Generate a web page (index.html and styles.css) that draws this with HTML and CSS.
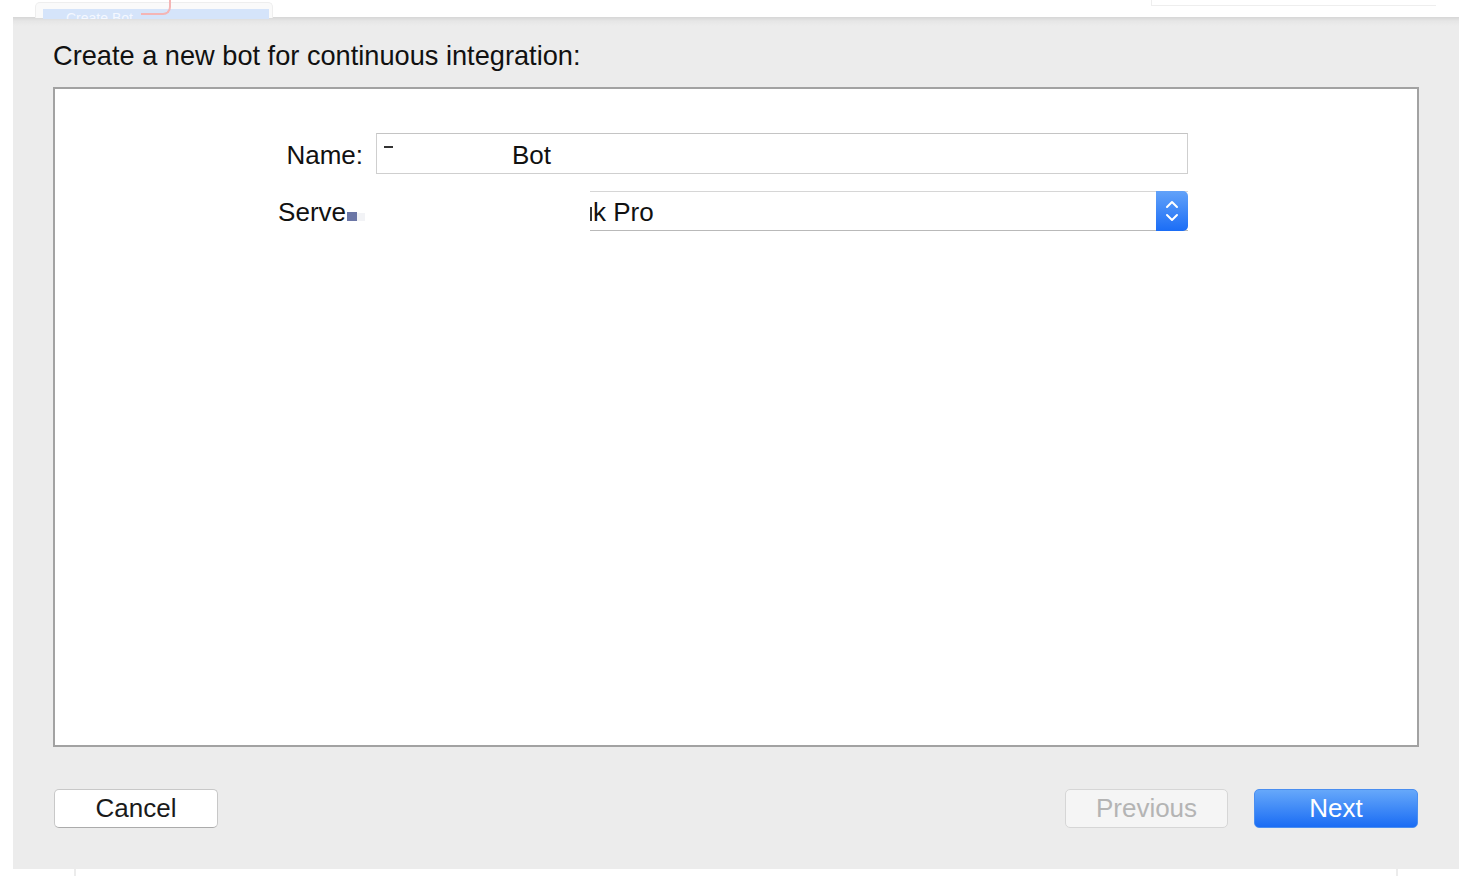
FILE: index.html
```html
<!DOCTYPE html>
<html>
<head>
<meta charset="utf-8">
<link rel="stylesheet" href="styles.css">
</head>
<body>
<div class="backdrop-top">
  <div class="menu-frag">
    <div class="menu-item">Create Bot</div>
    <div class="red-curve"></div>
  </div>
  <div class="right-frag"></div>
</div>
<div class="sheet">
  <div class="title">Create a new bot for continuous integration:</div>
  <div class="box">
    <div class="form">
      <div class="label name-label">Name:</div>
      <div class="field name-field"><span class="mark"></span><span class="name-text">Bot</span></div>
      <div class="label server-label">Serve<span class="sq"></span><span class="sq2"></span></div>
      <div class="server-row">
        <div class="redact"></div>
        <div class="popup">
          <div class="popup-text"><span class="frag"></span>k Pro</div>
          <div class="stepper">
            <svg width="14" height="24" viewBox="0 0 14 24"><path d="M2 8 L7 3 L12 8" fill="none" stroke="#fff" stroke-width="2" stroke-linecap="round" stroke-linejoin="round"/><path d="M2 16 L7 21 L12 16" fill="none" stroke="#fff" stroke-width="2" stroke-linecap="round" stroke-linejoin="round"/></svg>
          </div>
        </div>
      </div>
    </div>
  </div>
  <div class="buttons">
    <div class="btn cancel">Cancel</div>
    <div class="spacer"></div>
    <div class="btn previous">Previous</div>
    <div class="btn next">Next</div>
  </div>
</div>
<div class="backdrop-bottom">
  <div class="vline vl1"></div>
  <div class="vline vl2"></div>
</div>
</body>
</html>
```
FILE: styles.css
```css
html, body {
  margin: 0;
  padding: 0;
  background: #ffffff;
  width: 1466px;
  height: 876px;
  overflow: hidden;
  font-family: "Liberation Sans", Arial, sans-serif;
}
.backdrop-top {
  height: 17px;
  position: relative;
}
.menu-frag {
  position: absolute;
  left: 35px;
  top: 2px;
  width: 236px;
  height: 15px;
  border: 1px solid #eeeeee;
  border-bottom: none;
  border-radius: 5px 5px 0 0;
  background: #fafafa;
}
.menu-item {
  position: absolute;
  left: 7px;
  top: 6px;
  width: 226px;
  height: 10px;
  background: #d5e4fa;
  color: #f4f8ff;
  font-size: 14px;
  line-height: 18px;
  padding-left: 23px;
  box-sizing: border-box;
  overflow: hidden;
}
.red-curve {
  position: absolute;
  left: 105px;
  top: -3px;
  width: 28px;
  height: 13px;
  border-right: 2px solid #f4b5b5;
  border-bottom: 2px solid #f4b5b5;
  border-radius: 0 0 8px 0;
}
.right-frag {
  position: absolute;
  left: 1151px;
  top: 0;
  width: 284px;
  height: 5px;
  border-left: 1px solid #eeeeee;
  border-bottom: 1px solid #eeeeee;
}
.sheet {
  margin-left: 13px;
  width: 1446px;
  height: 852px;
  background: linear-gradient(#d6d6d6 0px, #e6e6e6 4px, #ececec 9px, #ececec 100%);
  box-sizing: border-box;
  padding: 0 40px;
  display: flex;
  flex-direction: column;
}
.title {
  margin-top: 24px;
  height: 46px;
  font-size: 27.2px;
  line-height: 30px;
  color: #111;
}
.box {
  height: 660px;
  background: #fff;
  border: 2px solid #a2a2a2;
  box-sizing: border-box;
}
.form {
  display: grid;
  grid-template-columns: 308px 812px;
  column-gap: 13px;
  row-gap: 17px;
  padding-top: 44px;
}
.label {
  text-align: right;
  font-size: 26px;
  color: #111;
  line-height: 41px;
  height: 41px;
}
.name-label {
  padding-top: 2px;
  height: 39px;
}
.server-label {
  line-height: 40px;
  height: 40px;
  padding-top: 1px;
  text-align: right;
  margin-right: -2px;
}
.sq {
  display: inline-block;
  width: 10px;
  height: 9px;
  background: #6b76a6;
  vertical-align: baseline;
  margin-left: 1px;
}
.sq2 {
  display: inline-block;
  width: 8px;
  height: 8px;
  background: #f2f3f6;
  vertical-align: baseline;
}
.field {
  height: 41px;
  border: 1px solid #cfcfcf;
  border-top-color: #c4c4c4;
  box-sizing: border-box;
  display: flex;
  align-items: center;
  font-size: 26px;
  color: #111;
  padding-top: 4px;
}
.mark {
  display: inline-block;
  width: 9px;
  height: 2px;
  background: #333;
  margin-left: 7px;
  margin-bottom: 18px;
}
.name-text {
  margin-left: 119px;
}
.server-row {
  display: flex;
  height: 40px;
}
.redact {
  width: 214px;
  background: #fff;
}
.popup {
  flex: 1;
  display: flex;
  border-top: 1px solid #d6d6d6;
  border-bottom: 1px solid #b9b9b9;
  box-sizing: border-box;
  height: 40px;
}
.popup-text {
  flex: 1;
  font-size: 26px;
  line-height: 40px;
  color: #111;
  overflow: hidden;
  white-space: nowrap;
}
.frag {
  display: inline-block;
  width: 2px;
  height: 14px;
  background: #333;
  margin-right: 1px;
  vertical-align: baseline;
}
.stepper {
  width: 32px;
  margin-top: -1px;
  margin-bottom: -1px;
  border-radius: 0 5px 5px 0;
  background: linear-gradient(#62a2f9, #1b6df6);
  display: flex;
  align-items: center;
  justify-content: center;
}
.buttons {
  display: flex;
  margin-top: 42px;
  height: 39px;
}
.spacer {
  flex: 1;
}
.btn {
  width: 164px;
  height: 39px;
  box-sizing: border-box;
  border-radius: 5px;
  font-size: 26px;
  line-height: 37px;
  text-align: center;
}
.cancel {
  background: #fff;
  border: 1px solid #c8c8c8;
  border-bottom-color: #ababab;
  color: #1a1a1a;
  margin-left: 1px;
}
.previous {
  background: #f5f5f5;
  border: 1px solid #d6d6d6;
  color: #b4b4b4;
  width: 163px;
}
.next {
  margin-left: 26px;
  margin-right: 1px;
  background: linear-gradient(#66a8fa, #1a6cf4);
  border: 1px solid #4a8ef0;
  color: #fff;
}
.backdrop-bottom {
  height: 7px;
  position: relative;
}
.vline {
  position: absolute;
  top: 0;
  width: 2px;
  height: 7px;
  background: #ececec;
}
.vl1 { left: 74px; }
.vl2 { left: 1396px; }
```
